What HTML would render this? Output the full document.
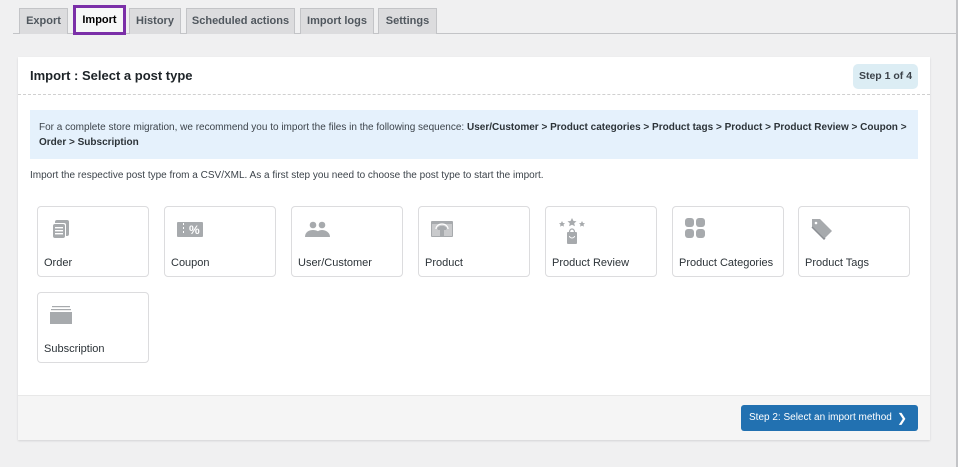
<!DOCTYPE html>
<html><head><meta charset="utf-8"><style>
*{box-sizing:border-box;margin:0;padding:0}
body{width:958px;height:467px;background:#f0f0f1;font-family:"Liberation Sans",Arial,sans-serif;color:#3c434a;position:relative;overflow:hidden}
.tabline{position:absolute;left:13px;top:33px;width:945px;height:1px;background:#c3c4c7}
.tab{position:absolute;top:8px;height:26px;background:#dcdcde;border:1px solid #c3c4c7;border-bottom:none;font-size:11px;font-weight:bold;color:#50575e;text-align:center;line-height:24px}
.tab.act{background:#f6f7f7;color:#000;border:3px solid #7b2fa8;top:5px;height:30px;line-height:24px}
.vline{position:absolute;left:956px;top:0;width:2px;height:467px;background:#c3c4c7}
.card{position:absolute;left:18px;top:57px;width:912px;height:383px;background:#fff;box-shadow:0 1px 2px rgba(0,0,0,.12)}
.hdr{position:absolute;left:0;top:0;width:912px;height:38px;border-bottom:1px dashed #d0d0d0}
.title{position:absolute;left:12px;top:11px;font-size:13px;font-weight:bold;color:#1d2327}
.badge{position:absolute;left:835px;top:7px;width:65px;height:25px;background:#dcedf4;border-radius:5px;font-size:10.5px;font-weight:bold;text-align:center;line-height:25px;color:#3c434a}
.info{position:absolute;left:12px;top:53px;width:888px;height:49px;background:#e5f1fc;font-size:10px;line-height:15px;padding:10px 9px;color:#3c434a}
.info b{color:#2c3338}
.inst{position:absolute;left:12px;top:113px;font-size:10px;color:#3c434a}
.tile{position:absolute;width:112px;height:71px;border:1px solid #dcdcde;border-radius:4px;background:#fff}
.tile svg{position:absolute;left:11px;top:10px}
.tile span{position:absolute;left:6px;top:50px;font-size:11px;color:#2c3338}
.foot{position:absolute;left:0;top:338px;width:912px;height:45px;background:#f5f5f5;border-top:1px solid #e8e8e8}
.btn{position:absolute;left:723px;top:9px;width:177px;height:26px;background:#2271b1;border-radius:3px;color:#fff;font-size:10px;line-height:26px;padding-left:8px}
.btn i{font-style:normal;position:absolute;right:11px;top:0;font-size:12px}
</style></head><body>
<div class="tabline"></div>
<div class="tab" style="left:19px;width:49px">Export</div>
<div class="tab act" style="left:73px;width:53px">Import</div>
<div class="tab" style="left:129px;width:52px">History</div>
<div class="tab" style="left:186px;width:109px">Scheduled actions</div>
<div class="tab" style="left:300px;width:74px">Import logs</div>
<div class="tab" style="left:378px;width:59px">Settings</div>
<div class="vline"></div>
<div class="card">
 <div class="hdr"><div class="title">Import : Select a post type</div><div class="badge">Step 1 of 4</div></div>
 <div class="info">For a complete store migration, we recommend you to import the files in the following sequence: <b>User/Customer &gt; Product categories &gt; Product tags &gt; Product &gt; Product Review &gt; Coupon &gt; Order &gt; Subscription</b></div>
 <div class="inst">Import the respective post type from a CSV/XML. As a first step you need to choose the post type to start the import.</div>

 <div class="tile" style="left:19px;top:149px"><svg width="24" height="24" viewBox="0 0 24 24" fill="#a7aaad"><rect x="6" y="3" width="14" height="16" rx="2"/><rect x="3" y="6" width="14" height="16" rx="2" fill="#fff"/><rect x="4" y="7" width="12" height="14" rx="2"/><g fill="#fff"><rect x="6" y="10" width="8" height="1.4"/><rect x="6" y="13" width="8" height="1.4"/><rect x="6" y="16" width="8" height="1.4"/></g></svg><span>Order</span></div>
 <div class="tile" style="left:146px;top:149px"><svg width="30" height="24" viewBox="0 0 30 24" fill="#a7aaad"><rect x="1" y="5" width="26" height="15" rx="1"/><text x="13" y="17" font-size="12" font-weight="bold" fill="#fff" font-family="Liberation Sans">%</text><g fill="#fff"><rect x="7" y="6" width="1" height="2"/><rect x="7" y="10" width="1" height="2"/><rect x="7" y="14" width="1" height="2"/></g></svg><span>Coupon</span></div>
 <div class="tile" style="left:273px;top:149px"><svg width="30" height="24" viewBox="0 0 30 24" fill="#a7aaad"><circle cx="10" cy="8" r="3.3"/><circle cx="19" cy="8" r="3.3"/><path d="M2 20c0-5 4-7 8-7s8 2 8 7z"/><path d="M12 20c0-5 4-7 7-7s8 2 8 7z"/></svg><span>User/Customer</span></div>
 <div class="tile" style="left:400px;top:149px"><svg width="26" height="24" viewBox="0 0 26 24" fill="#a7aaad"><rect x="1" y="4" width="22" height="16" rx="1"/><rect x="2" y="7" width="20" height="12" fill="#c9cacc"/><path d="M7 11l3-2h4l3 2-1 2h-2v7h-4v-7H8z" fill="#a7aaad"/><path d="M6 12a6 5 0 0 1 12 0" fill="none" stroke="#fff" stroke-width="1.2"/></svg><span>Product</span></div>
 <div class="tile" style="left:527px;top:149px"><svg width="30" height="30" viewBox="0 0 30 30" fill="#a7aaad"><path d="M15 1l1.5 3 3 .3-2.3 2 .7 3-2.9-1.6-2.9 1.6.7-3-2.3-2 3-.3z"/><path d="M5 4l1 2 2 .2-1.5 1.4.5 2-2-1-2 1 .5-2L2 6.2 4 6z"/><path d="M25 4l1 2 2 .2-1.5 1.4.5 2-2-1-2 1 .5-2L22 6.2 24 6z"/><rect x="10" y="15" width="10" height="12" rx="1"/><path d="M12.5 15a2.5 3 0 0 1 5 0" fill="none" stroke="#a7aaad" stroke-width="1.3"/><path d="M12.5 19a2.5 2 0 0 0 5 0" fill="none" stroke="#fff" stroke-width="1"/></svg><span>Product Review</span></div>
 <div class="tile" style="left:654px;top:149px"><svg width="24" height="24" viewBox="0 0 24 24" fill="#a7aaad"><rect x="1" y="1" width="9" height="9" rx="3"/><rect x="12" y="1" width="9" height="9" rx="3"/><rect x="1" y="12" width="9" height="9" rx="3"/><rect x="12" y="12" width="9" height="9" rx="3"/></svg><span>Product Categories</span></div>
 <div class="tile" style="left:780px;top:149px"><svg width="26" height="26" viewBox="0 0 26 26" fill="#a7aaad"><path d="M2 2h8l12 12-8 8L2 10z"/><path d="M2 10l12 12 1-1" fill="none" stroke="#8c8f94" stroke-width="1.5"/><circle cx="6" cy="6" r="1.3" fill="#fff"/></svg><span>Product Tags</span></div>
 <div class="tile" style="left:19px;top:235px"><svg width="26" height="24" viewBox="0 0 26 24" fill="#a7aaad"><rect x="3" y="3" width="18" height="1.2"/><rect x="2" y="6" width="20" height="1.2"/><rect x="1" y="9" width="22" height="12"/></svg><span>Subscription</span></div>

 <div class="foot"><div class="btn">Step 2: Select an import method<i>&#x276F;</i></div></div>
</div>
</body></html>
